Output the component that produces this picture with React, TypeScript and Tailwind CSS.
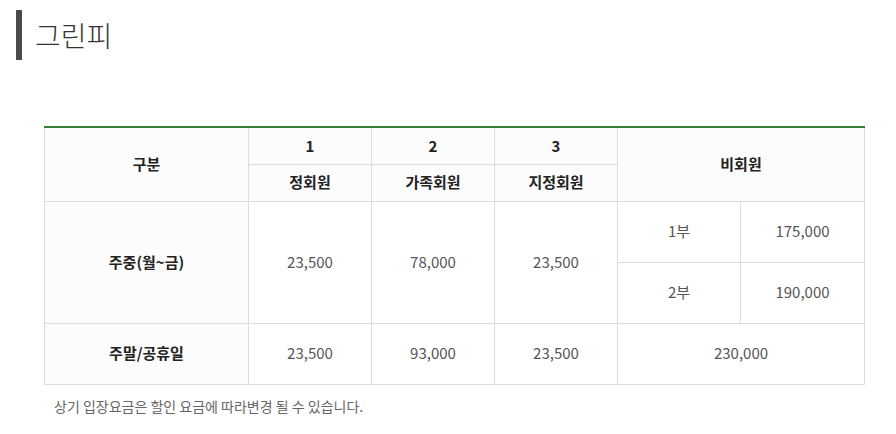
import React from "react";

const font = { fontFamily: '"Noto Sans CJK KR", "Noto Sans", sans-serif' };

export default function App() {
  const th = "border border-[#dddddd] bg-[#fcfcfc] text-[15px] font-bold text-[#222222] text-center align-middle p-0";
  const td = "border border-[#dddddd] bg-white text-[15px] text-[#555555] text-center align-middle p-0";
  return (
    <div className="w-[896px] h-[434px] bg-white" style={font}>
      <div className="pt-[10px] pl-[16px] flex items-center">
        <div className="w-[6px] h-[50px] bg-[#4a4a4a]" />
        <h1 className="ml-[13px] text-[28px] font-light text-[#333333] leading-none -mt-[1px]">그린피</h1>
      </div>
      <div className="pl-[44px] pt-[66px]">
        <table className="w-[820px] border-collapse table-fixed">
          <colgroup>
            <col className="w-[204px]" />
            <col className="w-[123px]" />
            <col className="w-[123px]" />
            <col className="w-[123px]" />
            <col className="w-[123px]" />
            <col className="w-[124px]" />
          </colgroup>
          <tbody>
            <tr className="h-[37px]">
              <th rowSpan={2} className={th + " border-t-2 border-t-[#358039]"}>구분</th>
              <th className={th + " border-t-2 border-t-[#358039]"}>1</th>
              <th className={th + " border-t-2 border-t-[#358039]"}>2</th>
              <th className={th + " border-t-2 border-t-[#358039]"}>3</th>
              <th colSpan={2} rowSpan={2} className={th + " border-t-2 border-t-[#358039]"}>비회원</th>
            </tr>
            <tr className="h-[37px]">
              <th className={th}>정회원</th>
              <th className={th}>가족회원</th>
              <th className={th}>지정회원</th>
            </tr>
            <tr className="h-[61px]">
              <th rowSpan={2} className={th}>주중(월~금)</th>
              <td rowSpan={2} className={td}>23,500</td>
              <td rowSpan={2} className={td}>78,000</td>
              <td rowSpan={2} className={td}>23,500</td>
              <td className={td}>1부</td>
              <td className={td}>175,000</td>
            </tr>
            <tr className="h-[61px]">
              <td className={td}>2부</td>
              <td className={td}>190,000</td>
            </tr>
            <tr className="h-[61px]">
              <th className={th}>주말/공휴일</th>
              <td className={td}>23,500</td>
              <td className={td}>93,000</td>
              <td className={td}>23,500</td>
              <td colSpan={2} className={td}>230,000</td>
            </tr>
          </tbody>
        </table>
        <p className="mt-[11px] ml-[10px] text-[14px] text-[#666666]">상기 입장요금은 할인 요금에 따라변경 될 수 있습니다.</p>
      </div>
    </div>
  );
}
